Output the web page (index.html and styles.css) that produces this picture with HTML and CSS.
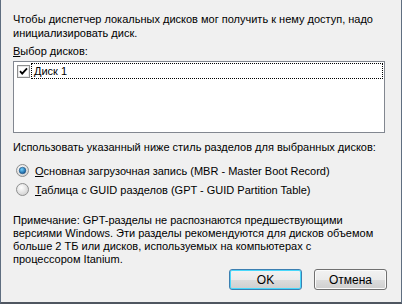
FILE: index.html
```html
<!DOCTYPE html>
<html lang="ru">
<head>
  <meta charset="UTF-8" />
  <title>Инициализация диска</title>
  <link rel="stylesheet" href="styles.css">
</head>
<body>
  <div class="dialog">
    <p class="intro">Чтобы диспетчер локальных дисков мог получить к нему доступ, надо инициализировать диск.</p>

    <div class="label"><u>В</u>ыбор дисков:</div>
    <div class="listbox">
      <div class="list-item">
        <svg class="check" width="13" height="13" viewBox="0 0 13 13">
          <rect x="0.5" y="0.5" width="12" height="12" fill="#fff" stroke="#8e8f8f" />
          <rect x="1.5" y="1.5" width="10" height="10" fill="none" stroke="#e8e8e8" />
          <path d="M3 6.2 L5.2 8.6 L10 3.4" fill="none" stroke="#000" stroke-width="1.8" />
        </svg>
        <span class="item-text">Диск 1</span>
      </div>
    </div>

    <div class="label style-label">Использовать указанный ниже стиль разделов для выбранных дисков:</div>
    <div class="radio first">
      <svg width="13" height="13" viewBox="0 0 13 13">
        <defs>
          <radialGradient id="rg" cx="0.4" cy="0.35" r="0.7">
            <stop offset="0" stop-color="#ffffff" />
            <stop offset="1" stop-color="#cfcfcf" />
          </radialGradient>
          <radialGradient id="dot" cx="0.4" cy="0.35" r="0.7">
            <stop offset="0" stop-color="#6fd0ff" />
            <stop offset="1" stop-color="#0b4f8f" />
          </radialGradient>
        </defs>
        <circle cx="6.5" cy="6.5" r="6" fill="url(#rg)" stroke="#8e8f8f" />
        <circle cx="6.5" cy="6.5" r="3.3" fill="url(#dot)" stroke="#1c5380" stroke-width="0.6" />
      </svg>
      <span><u>О</u>сновная загрузочная запись (MBR - Master Boot Record)</span>
    </div>
    <div class="radio">
      <svg width="13" height="13" viewBox="0 0 13 13">
        <circle cx="6.5" cy="6.5" r="6" fill="url(#rg)" stroke="#8e8f8f" />
      </svg>
      <span><u>Т</u>аблица с GUID разделов (GPT - GUID Partition Table)</span>
    </div>

    <p class="note">Примечание: GPT-разделы не распознаются предшествующими версиями Windows. Эти разделы рекомендуются для дисков объемом больше 2 ТБ или дисков, используемых на компьютерах с процессором Itanium.</p>

    <div class="buttons">
      <button class="btn default">OK</button>
      <button class="btn">Отмена</button>
    </div>
  </div>
</body>
</html>
```

FILE: styles.css
```css
body {
  margin: 0;
  font-family: 'Liberation Sans', Arial, sans-serif;
  font-size: 11px;
  color: #000;
}

.dialog {
  box-sizing: border-box;
  width: 402px;
  height: 304px;
  background: #f0f0f0;
  border-left: 1px solid #5f6e80;
  border-right: 1px solid #5f6e80;
  border-bottom: 2px solid #4f5660;
  padding: 12px 16px 0 12px;
}

p {
  margin: 0;
}

.intro {
  line-height: 14px;
}

.label {
  line-height: 14px;
  margin-top: 4px;
}

.listbox {
  margin-top: 3px;
  height: 68px;
  background: #fff;
  border: 1px solid #828790;
  padding: 1px;
}

.list-item {
  display: flex;
  align-items: center;
  height: 16px;
  margin-left: 2px;
}

.check {
  flex: none;
}

.item-text {
  flex: 1;
  margin-left: 1px;
  padding-left: 2px;
  line-height: 14px;
  border: 1px dotted #000;
}

.style-label {
  margin-top: 7px;
}

.radio {
  display: flex;
  align-items: center;
  gap: 6px;
  height: 19px;
  margin-left: 3px;
}

.radio.first {
  margin-top: 7px;
}

.note {
  margin-top: 15px;
  line-height: 13px;
  padding-right: 10px;
}

.buttons {
  display: flex;
  justify-content: flex-end;
  gap: 12px;
  margin-top: 3px;
  margin-right: -2px;
}

.btn {
  width: 73px;
  height: 21px;
  font-family: inherit;
  font-size: 12px;
  color: #000;
  border: 1px solid #707070;
  border-radius: 3px;
  background: linear-gradient(#f2f2f2 0%, #ebebeb 50%, #dddddd 51%, #cfcfcf 100%);
  box-shadow: inset 0 0 0 1px #fbfbfb;
  padding: 0;
}

.btn.default {
  border-color: #3c7fb1;
  box-shadow: inset 0 0 0 1px #48d8fb;
}
```
